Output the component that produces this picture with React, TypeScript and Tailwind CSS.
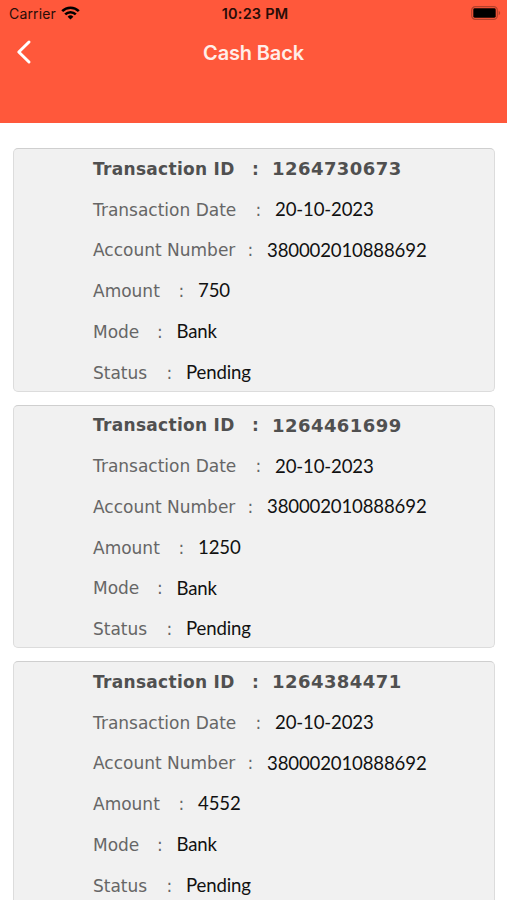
import clsx from "clsx";

const transactions = [
    {id: "1264730673", date: "20-10-2023", account: "380002010888692", amount: "750", mode: "Bank", status: "Pending"},
    {id: "1264461699", date: "20-10-2023", account: "380002010888692", amount: "1250", mode: "Bank", status: "Pending"},
    {id: "1264384471", date: "20-10-2023", account: "380002010888692", amount: "4552", mode: "Bank", status: "Pending"},
];

type Transaction = (typeof transactions)[number];

// label + colon widths differ from row to row
const fields: {key: keyof Transaction; label: string; labelWidth: string; colonWidth: string}[] = [
    {key: "id", label: "Transaction ID", labelWidth: "w-[159px]", colonWidth: "w-[20px]"},
    {key: "date", label: "Transaction Date", labelWidth: "w-[162.5px]", colonWidth: "w-[19.5px]"},
    {key: "account", label: "Account Number", labelWidth: "w-[154.5px]", colonWidth: "w-[19.5px]"},
    {key: "amount", label: "Amount", labelWidth: "w-[85.5px]", colonWidth: "w-[19.5px]"},
    {key: "mode", label: "Mode", labelWidth: "w-[64px]", colonWidth: "w-[19.5px]"},
    {key: "status", label: "Status", labelWidth: "w-[73.5px]", colonWidth: "w-[19.5px]"},
];

function StatusBar() {
    return (
        <div className="flex h-7 items-center text-[#280d08]">
            <div className="flex flex-1 items-center gap-[5px] pl-[9px]">
                <span className="-mt-[1px] text-[14px] tracking-[0.15px]">Carrier</span>
                <svg width="19" height="14" viewBox="0 0 19 14" className="-mt-[2px]" fill="none" stroke="black" strokeWidth="2.6">
                    <path d="M1.2 5.2a11.7 11.7 0 0 1 16.6 0" />
                    <path d="M4.2 8.4a7.5 7.5 0 0 1 10.6 0" />
                    <path d="M9.5 13.6 6.6 10.8a4.1 4.1 0 0 1 5.8 0Z" fill="black" stroke="none" />
                </svg>
            </div>
            <span className="text-[14.5px] font-semibold tracking-[0.2px]">10:23 PM</span>
            <div className="-mt-[2px] flex flex-1 justify-end pr-[6px]">
                <svg width="30" height="14" viewBox="0 0 30 14">
                    <rect x="0.7" y="0.7" width="25.6" height="12.6" rx="3.6" fill="none" stroke="#b3402b" strokeWidth="1.2" />
                    <rect x="2.3" y="2.3" width="22.4" height="9.4" rx="1.4" fill="black" />
                    <path d="M27.7 4.8c2 .8 2 3.6 0 4.4Z" fill="#b3402b" />
                </svg>
            </div>
        </div>
    );
}

function TransactionCard({transaction}: {transaction: Transaction}) {
    return (
        <section className="h-[243.5px] shrink-0 rounded-[5px] border border-[#dcdcdc] border-t-[#cfcfcf] bg-[#f1f1f1] pl-[79px]">
            {fields.map(({key, label, labelWidth, colonWidth}) => (
                <div
                    key={key}
                    className={clsx(
                        "flex h-[40.7px] items-center whitespace-nowrap font-['DejaVu_Sans',sans-serif] text-[17px]",
                        key === "id" ? "font-bold tracking-[0.3px] text-[#505050]" : "pt-[1px] text-[#666]"
                    )}
                >
                    <span className={labelWidth}>{label}</span>
                    <span className={colonWidth}>:</span>
                    <span
                        className={
                            key === "id"
                                ? "-mt-[1px] text-[18px] tracking-[0.45px]"
                                : "-mt-[1px] font-[Lato,sans-serif] text-[18.6px] tracking-[-0.15px] text-[#111]"
                        }
                    >
                        {transaction[key]}
                    </span>
                </div>
            ))}
        </section>
    );
}

export default function App() {
    return (
        <div className="flex h-[900px] w-full flex-col overflow-hidden bg-white font-[Inter,sans-serif]">
            <header className="h-[123px] shrink-0 bg-[#ff583b]">
                <StatusBar />
                <div className="grid h-12 grid-cols-[1fr_auto_1fr] items-center">
                    <button aria-label="Back" className="pl-[15px]">
                        <svg width="17" height="26" viewBox="0 0 17 26" fill="none" stroke="white" strokeWidth="3" strokeLinecap="round" strokeLinejoin="round">
                            <path d="M14 3 3.8 13 14 23" />
                        </svg>
                    </button>
                    <h1 className="pt-[1px] text-[20px] font-semibold tracking-[-0.15px] text-[#ffeee9]">Cash Back</h1>
                </div>
            </header>
            <main className="flex flex-col gap-[13px] pt-[25px] pr-[12.5px] pl-[13px]">
                {transactions.map(transaction => (
                    <TransactionCard key={transaction.id} transaction={transaction} />
                ))}
            </main>
        </div>
    );
}
